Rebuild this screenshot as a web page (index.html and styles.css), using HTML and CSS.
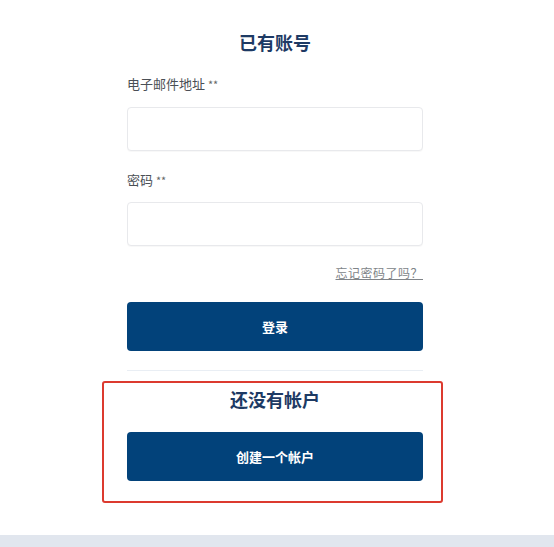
FILE: index.html
```html
<!DOCTYPE html>
<html lang="zh-CN">
<head>
<meta charset="utf-8">
<title>已有账号</title>
<link rel="stylesheet" href="styles.css">
</head>
<body>
<main class="page">
  <section class="login">
    <h2 class="title">已有账号</h2>
    <label class="label">电子邮件地址 <span class="req">**</span></label>
    <input class="field" type="email">
    <label class="label label-2">密码 <span class="req">**</span></label>
    <input class="field field-2" type="password">
    <div class="forgot-row"><a class="forgot" href="#">忘记密码了吗？</a></div>
    <button class="btn btn-login">登录</button>
    <div class="divider"></div>
  </section>
  <section class="register">
    <h2 class="title title-2">还没有帐户</h2>
    <button class="btn btn-create">创建一个帐户</button>
  </section>
  <footer class="band"></footer>
</main>
</body>
</html>
```
FILE: styles.css
```css
* { box-sizing: border-box; }
html, body { margin: 0; padding: 0; background: #fff; }
body {
  font-family: "Noto Sans CJK SC", "Noto Sans", "Liberation Sans", sans-serif;
  color: #444;
  height: 547px;
  overflow: hidden;
}
.page { display: flex; flex-direction: column; padding-top: 30px; }
.login {
  width: 296px;
  margin-left: 127px;
  display: flex;
  flex-direction: column;
}
.title {
  margin: 0;
  font-size: 18px;
  line-height: 24px;
  font-weight: 700;
  color: #1d3a64;
  text-align: center;
}
.label {
  margin-top: 21px;
  font-size: 13px;
  line-height: 18px;
  color: #4a4f55;
}
.label-2 { margin-top: 20px; }
.req { color: #666; font-size: 11px; }
.field {
  margin-top: 14px;
  height: 44px;
  width: 100%;
  border: 1px solid #e8e9ec;
  border-radius: 4px;
  background: #fff;
  box-shadow: 0 1px 1px rgba(0,0,0,0.03);
}
.field-2 { margin-top: 13px; }
.forgot-row {
  margin-top: 18px;
  display: flex;
  justify-content: flex-end;
  line-height: 18px;
}
.forgot {
  font-size: 12px;
  color: #808488;
  text-decoration: underline;
  letter-spacing: 0.5px;
}
.btn {
  height: 49px;
  width: 100%;
  border: none;
  border-radius: 4px;
  background: #02427a;
  color: #fff;
  font-family: inherit;
  font-size: 13px;
  font-weight: 700;
}
.btn-login { margin-top: 20px; }
.divider {
  margin-top: 19px;
  height: 1px;
  background: #e9eef4;
}
.register {
  margin-top: 10px;
  margin-left: 102px;
  width: 341px;
  border: 2px solid #dc3a2f;
  border-radius: 3px;
  padding: 4px 18px 20px 23px;
  display: flex;
  flex-direction: column;
}
.btn-create { margin-top: 21px; }
.band {
  margin-top: 32px;
  height: 20px;
  background: #e1e6ee;
}
```
